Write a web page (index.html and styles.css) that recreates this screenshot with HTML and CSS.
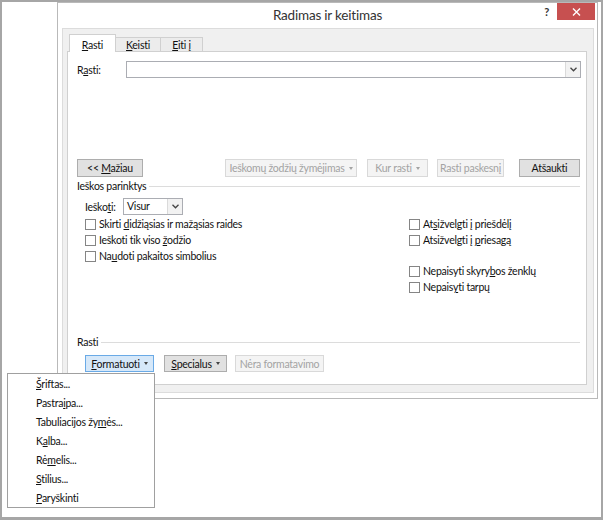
FILE: index.html
```html
<!DOCTYPE html>
<html lang="lt">
<head>
<meta charset="utf-8">
<title>Radimas ir keitimas</title>
<link rel="stylesheet" href="styles.css">
</head>
<body>
<div class="screen">
  <div class="dialog">
    <div class="titlebar">
      <div></div>
      <div class="title">Radimas ir keitimas</div>
      <div class="title-controls">
        <span class="help">?</span>
        <span class="close"><svg width="9" height="8" viewBox="0 0 9 8"><path d="M1 0.5 L8 7.5 M8 0.5 L1 7.5" stroke="#fff" stroke-width="1.4" fill="none"/></svg></span>
      </div>
    </div>
    <div class="client">
      <div class="tabs">
        <div class="tab active w-t1"><u>R</u>asti</div>
        <div class="tab w-t2"><u>K</u>eisti</div>
        <div class="tab w-t3"><u>E</u>iti į</div>
      </div>
      <div class="panel">
        <div class="find-row">
          <span class="find-label">R<u>a</u>sti:</span>
          <div class="combo combo-wide">
            <span class="combo-text"></span>
            <span class="combo-btn"><svg width="7" height="5" viewBox="0 0 7 5"><path d="M0.5 0.8 L3.5 3.8 L6.5 0.8" stroke="#444" stroke-width="1.3" fill="none"/></svg></span>
          </div>
        </div>
        <div class="btn-row top-buttons">
          <div class="btn w-less"><span>&lt;&lt; <u>M</u>ažiau</span></div>
          <div class="spacer"></div>
          <div class="btn disabled w-mark"><span>Ieškomų žodžių žymėjimas</span><span class="caret"></span></div>
          <div class="btn disabled w-where"><span>Kur rasti</span><span class="caret"></span></div>
          <div class="btn disabled w-next"><span>Rasti paskesnį</span></div>
          <div class="btn w-cancel"><span>Atšaukti</span></div>
        </div>
        <div class="group-head"><span>Ieškos parinktys</span><span class="rule"></span></div>
        <div class="options">
          <div class="col col-left">
            <div class="search-row">
              <span class="search-label">Ieško<u>t</u>i:</span>
              <div class="combo combo-small">
                <span class="combo-text">Visur</span>
                <span class="combo-btn"><svg width="7" height="5" viewBox="0 0 7 5"><path d="M0.5 0.8 L3.5 3.8 L6.5 0.8" stroke="#444" stroke-width="1.3" fill="none"/></svg></span>
              </div>
            </div>
            <div class="check first"><span class="box"></span><span>Skirti <u>d</u>idžiąsias ir mažąsias raides</span></div>
            <div class="check"><span class="box"></span><span>Ieškoti tik viso <u>ž</u>odžio</span></div>
            <div class="check"><span class="box"></span><span>Na<u>u</u>doti pakaitos simbolius</span></div>
          </div>
          <div class="col col-right">
            <div class="check"><span class="box"></span><span>At<u>s</u>ižvelgti į priešdėlį</span></div>
            <div class="check"><span class="box"></span><span>Atsižvelgti į <u>p</u>riesagą</span></div>
            <div class="check gap"><span class="box"></span><span>Nepaisyti skyry<u>b</u>os ženklų</span></div>
            <div class="check"><span class="box"></span><span>Nepais<u>y</u>ti tarpų</span></div>
          </div>
        </div>
        <div class="group-head second"><span>Rasti</span><span class="rule"></span></div>
        <div class="btn-row bottom-buttons">
          <div class="btn pressed w-format"><span><u>F</u>ormatuoti</span><span class="caret"></span></div>
          <div class="btn w-special"><span><u>S</u>pecialus</span><span class="caret"></span></div>
          <div class="btn disabled w-none"><span>Nėra formatavimo</span></div>
        </div>
      </div>
    </div>
  </div>
  <div class="menu">
    <div class="menu-item"><u>Š</u>riftas...</div>
    <div class="menu-item">Pastra<u>i</u>pa...</div>
    <div class="menu-item">Tabuliacijos žy<u>m</u>ės...</div>
    <div class="menu-item">K<u>a</u>lba...</div>
    <div class="menu-item">Rė<u>m</u>elis...</div>
    <div class="menu-item"><u>S</u>tilius...</div>
    <div class="menu-item"><u>P</u>aryškinti</div>
  </div>
</div>
</body>
</html>
```

FILE: styles.css
```css
html, body {
  margin: 0;
  padding: 0;
  background: #fff;
}

.screen {
  position: relative;
  width: 603px;
  height: 520px;
  box-sizing: border-box;
  border: 2px solid #a6a6a6;
  border-bottom-width: 3px;
  background: #fff;
  overflow: hidden;
  font-family: Lato, "Open Sans", sans-serif;
  font-size: 10.5px;
  letter-spacing: -0.25px;
  color: #111;
}

u {
  text-decoration-thickness: 1px;
  text-underline-offset: 1px;
}

/* window */
.dialog {
  position: absolute;
  left: 55px;
  top: 0;
  width: 541px;
  height: 397px;
  box-sizing: border-box;
  border: 1px solid #b9b9b9;
  background: #fff;
  display: flex;
  flex-direction: column;
}

.titlebar {
  height: 25px;
  display: grid;
  grid-template-columns: 1fr auto 1fr;
  align-items: start;
  flex: none;
}

.title {
  font-size: 13.5px;
  letter-spacing: -0.2px;
  color: #333;
  line-height: 25px;
}

.title-controls {
  justify-self: end;
  display: flex;
  align-items: flex-start;
  margin-right: 2px;
}

.help {
  font-size: 11px;
  font-weight: bold;
  color: #333;
  line-height: 18px;
  margin-right: 8px;
}

.close {
  width: 38px;
  height: 17px;
  background: #c75050;
  display: flex;
  align-items: center;
  justify-content: center;
}

.client {
  margin: 0 3px 0 4px;
  height: 365px;
  box-sizing: border-box;
  border: 1px solid #dcdcdc;
  background: #f0f0f0;
  padding: 5px 6px 7px 4px;
  display: flex;
  flex-direction: column;
}

/* tabs */
.tabs {
  height: 17px;
  display: flex;
  align-items: flex-end;
  padding-left: 2px;
  flex: none;
}

.tab {
  height: 14px;
  line-height: 14px;
  box-sizing: border-box;
  border: 1px solid #d0d0d0;
  border-bottom: none;
  background: #ececec;
  text-align: center;
  margin-left: -1px;
}

.tab.active {
  height: 18px;
  margin-bottom: -1px;
  margin-left: 0;
  padding-top: 3px;
  background: #fff;
  position: relative;
  z-index: 1;
}

.w-t1 { width: 47px; }
.w-t2 { width: 46px; }
.w-t3 { width: 43px; }

.panel {
  height: 334px;
  box-sizing: border-box;
  border: 1px solid #d0d0d0;
  background: #fff;
  padding: 0 5px 0 9px;
  display: flex;
  flex-direction: column;
}

/* find row */
.find-row {
  margin-top: 9px;
  height: 17px;
  display: flex;
  align-items: center;
}

.find-label {
  width: 49px;
}

.combo {
  height: 17px;
  box-sizing: border-box;
  border: 1px solid #abadb3;
  background: #fff;
  display: flex;
  align-items: stretch;
}

.combo-wide { flex: 1; }
.combo-small { width: 60px; }

.combo-text {
  flex: 1;
  padding-left: 3px;
  line-height: 15px;
}

.combo-btn {
  width: 14px;
  border-left: 1px solid #dadada;
  background: #f2f2f2;
  display: flex;
  align-items: center;
  justify-content: center;
}

/* buttons */
.btn-row {
  display: flex;
  align-items: stretch;
}

.top-buttons {
  margin-top: 81px;
  height: 18px;
}

.spacer { flex: 1; }

.btn {
  box-sizing: border-box;
  border: 1px solid #adadad;
  background: #e1e1e1;
  color: #111;
  display: flex;
  align-items: center;
  justify-content: center;
  white-space: nowrap;
}

.btn.disabled {
  border-color: #d9d9d9;
  background: #f4f4f4;
  color: #a3a3a3;
}

.btn.pressed {
  border-color: #6aaae6;
  background: #d6e8f9;
}

.caret {
  width: 0;
  height: 0;
  border-left: 2.5px solid transparent;
  border-right: 2.5px solid transparent;
  border-top: 3px solid #444;
  margin-left: 4px;
}

.btn.disabled .caret { border-top-color: #a3a3a3; }

.w-less { width: 66px; }
.w-mark { width: 132px; }
.w-where { width: 61px; margin-left: 10px; }
.w-next { width: 67px; margin-left: 9px; }
.w-cancel { width: 61px; margin-left: 15px; margin-right: 1px; }

/* groups */
.group-head {
  margin-top: 3px;
  height: 12px;
  display: flex;
  align-items: center;
}

.group-head .rule {
  flex: 1;
  height: 1px;
  background: #dcdcdc;
  margin-left: 3px;
  margin-right: 1px;
}

.group-head.second { margin-top: 41px; }

.options {
  margin-top: 6px;
  display: flex;
  padding-left: 8px;
}

.col-left { width: 324px; }
.col-right { padding-top: 18px; }

.search-row {
  height: 17px;
  display: flex;
  align-items: center;
}

.search-label { width: 38px; }

.check {
  height: 16px;
  display: flex;
  align-items: center;
  white-space: nowrap;
}

.check.first { margin-top: 1px; }
.check.gap { margin-top: 15px; }

.box {
  width: 11px;
  height: 11px;
  box-sizing: border-box;
  border: 1px solid #858585;
  background: #fff;
  margin-right: 3px;
  flex: none;
}

.bottom-buttons {
  margin-top: 7px;
  height: 17px;
  padding-left: 8px;
}

.w-format { width: 69px; }
.w-special { width: 63px; margin-left: 10px; }
.w-none { width: 89px; margin-left: 8px; }

/* dropdown menu */
.menu {
  position: absolute;
  left: 5px;
  top: 371px;
  width: 148px;
  height: 135px;
  box-sizing: border-box;
  border: 1px solid #a0a0a0;
  background: #fff;
  padding-top: 1px;
}

.menu-item {
  height: 19px;
  line-height: 19px;
  padding-left: 28px;
  white-space: nowrap;
}
```
